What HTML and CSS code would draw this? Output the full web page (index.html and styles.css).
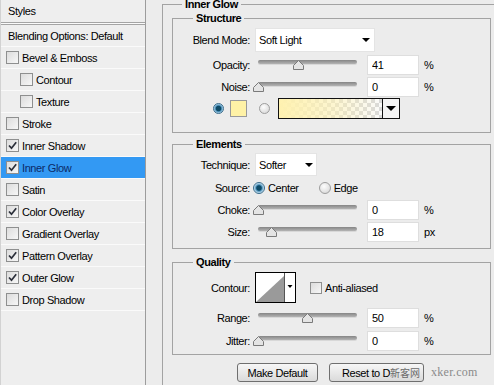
FILE: index.html
```html
<!DOCTYPE html>
<html lang="en">
<head>
    <meta charset="UTF-8">
    <title>Layer Style - Inner Glow</title>
    <link rel="stylesheet" href="styles.css">
</head>
<body>
<div class="app">
    <!-- Styles list -->
    <aside class="styles-list">
        <div class="list-head">Styles</div>
        <div class="list-item blending">Blending Options: Default</div>
        <div class="list-item"><span class="cb"></span>Bevel &amp; Emboss</div>
        <div class="list-item sub"><span class="cb"></span>Contour</div>
        <div class="list-item sub"><span class="cb"></span>Texture</div>
        <div class="list-item"><span class="cb"></span>Stroke</div>
        <div class="list-item"><span class="cb"><svg viewBox="0 0 11 11"><path d="M2 5.5 L4.5 8.2 L9.2 2.2"/></svg></span>Inner Shadow</div>
        <div class="list-item active"><span class="cb"><svg viewBox="0 0 11 11"><path d="M2 5.5 L4.5 8.2 L9.2 2.2"/></svg></span>Inner Glow</div>
        <div class="list-item"><span class="cb"></span>Satin</div>
        <div class="list-item"><span class="cb"><svg viewBox="0 0 11 11"><path d="M2 5.5 L4.5 8.2 L9.2 2.2"/></svg></span>Color Overlay</div>
        <div class="list-item"><span class="cb"></span>Gradient Overlay</div>
        <div class="list-item"><span class="cb"><svg viewBox="0 0 11 11"><path d="M2 5.5 L4.5 8.2 L9.2 2.2"/></svg></span>Pattern Overlay</div>
        <div class="list-item"><span class="cb"><svg viewBox="0 0 11 11"><path d="M2 5.5 L4.5 8.2 L9.2 2.2"/></svg></span>Outer Glow</div>
        <div class="list-item"><span class="cb"></span>Drop Shadow</div>
    </aside>

    <!-- Settings -->
    <main class="panel">
        <fieldset class="group outer">
            <legend>Inner Glow</legend>

            <fieldset class="group structure">
                <legend>Structure</legend>
                <div class="row row-blend">
                    <label class="lbl">Blend Mode:</label>
                    <div class="select select-blend">Soft Light<span class="arrow"></span></div>
                </div>
                <div class="row row-num">
                    <label class="lbl">Opacity:</label>
                    <div class="slider"><div class="track"></div><svg class="thumb" style="--v:41" viewBox="0 0 11 10"><path d="M5.5 0.5 L10.5 5.5 V9.5 H0.5 V5.5 Z"/></svg></div>
                    <input class="num" value="41"><span class="unit">%</span>
                </div>
                <div class="row row-num gap2">
                    <label class="lbl">Noise:</label>
                    <div class="slider"><div class="track"></div><svg class="thumb" style="--v:0" viewBox="0 0 11 10"><path d="M5.5 0.5 L10.5 5.5 V9.5 H0.5 V5.5 Z"/></svg></div>
                    <input class="num" value="0"><span class="unit">%</span>
                </div>
                <div class="row row-color">
                    <span class="radio small on"></span>
                    <span class="swatch"></span>
                    <span class="radio small"></span>
                    <div class="gradient"><span class="gradient-fill"></span><span class="gradient-drop"><span class="arrow big"></span></span></div>
                </div>
            </fieldset>

            <fieldset class="group elements">
                <legend>Elements</legend>
                <div class="row row-tech">
                    <label class="lbl">Technique:</label>
                    <div class="select select-tech">Softer<span class="arrow"></span></div>
                </div>
                <div class="row row-source">
                    <label class="lbl">Source:</label>
                    <span class="radio on"></span><span class="opt">Center</span>
                    <span class="radio second"></span><span class="opt">Edge</span>
                </div>
                <div class="row row-num gap1">
                    <label class="lbl">Choke:</label>
                    <div class="slider"><div class="track"></div><svg class="thumb" style="--v:0" viewBox="0 0 11 10"><path d="M5.5 0.5 L10.5 5.5 V9.5 H0.5 V5.5 Z"/></svg></div>
                    <input class="num" value="0"><span class="unit">%</span>
                </div>
                <div class="row row-num gap2">
                    <label class="lbl">Size:</label>
                    <div class="slider"><div class="track"></div><svg class="thumb" style="--v:14" viewBox="0 0 11 10"><path d="M5.5 0.5 L10.5 5.5 V9.5 H0.5 V5.5 Z"/></svg></div>
                    <input class="num" value="18"><span class="unit">px</span>
                </div>
            </fieldset>

            <fieldset class="group quality">
                <legend>Quality</legend>
                <div class="row row-contour">
                    <label class="lbl">Contour:</label>
                    <svg class="contour" viewBox="0 0 41 31" width="41" height="31">
                        <rect x="0.5" y="0.5" width="40" height="30" fill="#fff" stroke="#000"/>
                        <polygon points="1,30 29,4 29,30" fill="#9a9a9a"/>
                        <line x1="29.5" y1="1" x2="29.5" y2="30" stroke="#555"/>
                        <polygon points="32.5,13 37.5,13 35,16" fill="#000"/>
                    </svg>
                    <span class="cb box"></span><span class="opt">Anti-aliased</span>
                </div>
                <div class="row row-num gap5">
                    <label class="lbl">Range:</label>
                    <div class="slider"><div class="track"></div><svg class="thumb" style="--v:50" viewBox="0 0 11 10"><path d="M5.5 0.5 L10.5 5.5 V9.5 H0.5 V5.5 Z"/></svg></div>
                    <input class="num" value="50"><span class="unit">%</span>
                </div>
                <div class="row row-num gap3">
                    <label class="lbl">Jitter:</label>
                    <div class="slider"><div class="track"></div><svg class="thumb" style="--v:0" viewBox="0 0 11 10"><path d="M5.5 0.5 L10.5 5.5 V9.5 H0.5 V5.5 Z"/></svg></div>
                    <input class="num" value="0"><span class="unit">%</span>
                </div>
            </fieldset>

            <div class="buttons">
                <button class="btn btn-default">Make Default</button>
                <button class="btn btn-reset">Reset to D<span class="mark">新客网</span></button>
                <span class="site">xker.com</span>
            </div>
        </fieldset>
    </main>
</div>
</body>
</html>
```

FILE: styles.css
```css
/* Basic reset */
* {
    box-sizing: border-box;
    margin: 0;
    padding: 0;
}

body {
    font-family: "Liberation Sans", Arial, sans-serif;
    font-size: 11px;
    letter-spacing: -0.4px;
    color: #000;
    background: #ececec;
    overflow: hidden;
}

.app {
    display: flex;
    height: 385px;
}

/* Left list */
.styles-list {
    width: 146px;
    flex: none;
    background: #eeeeee;
    border-left: 1px solid #d2d2d2;
    border-right: 1px solid #9c9c9c;
}

.list-head {
    height: 23px;
    line-height: 22px;
    padding-left: 7px;
    border-bottom: 1px solid #a4a4a4;
    box-shadow: 0 1px 0 #fafafa;
}

.list-item {
    display: flex;
    align-items: center;
    height: 22px;
    padding-left: 5px;
    border-bottom: 1px solid #fafafa;
}

.list-item.blending {
    height: 23px;
    margin-top: 1px;
    padding-left: 7px;
    border-top: 1px solid #a4a4a4;
}

.list-item.sub {
    padding-left: 19px;
}

.list-item.active {
    background: #3399f3;
    color: #0c2a66;
}

.cb {
    width: 13px;
    height: 13px;
    margin-right: 3px;
    border: 1px solid #8e8f8f;
    background: linear-gradient(135deg, #dcdcdc, #f7f7f7);
    display: flex;
    align-items: center;
    justify-content: center;
    flex: none;
}

.cb svg {
    width: 11px;
    height: 11px;
}

.cb path {
    fill: none;
    stroke: #2b2f3a;
    stroke-width: 1.7;
}

/* Right panel */
.panel {
    flex: 1;
    min-width: 0;
    overflow: hidden;
}

.group {
    border: 1px solid #a3a3a3;
}

.group > legend {
    font-weight: bold;
    line-height: 12px;
    padding: 0 3px;
    margin-left: 20px;
}

.outer {
    width: max-content;
    margin: -1px 0 0 16px;
    padding: 0 20px 60px 9px;
}

.outer > legend {
    margin-left: 10px;
    line-height: 10px;
}

.structure,
.elements,
.quality {
    width: 319px;
}

.structure {
    margin-top: 3px;
    padding: 4px 0 13px;
}

.elements {
    margin-top: 5px;
    padding: 3px 0 6px;
}

.quality {
    margin-top: 7px;
    padding: 4px 0 3px;
}

.row {
    display: flex;
    align-items: center;
}

.lbl {
    width: 77px;
    flex: none;
    text-align: right;
}

.row-blend { height: 24px; }
.row-num { height: 20px; margin-top: 3px; }
.row-num.gap1 { margin-top: 1px; }
.row-num.gap2 { margin-top: 2px; }
.row-num.gap3 { margin-top: 3px; }
.row-num.gap5 { margin-top: 5px; }
.row-color { height: 21px; margin-top: 1px; padding-left: 40px; }
.row-tech { height: 23px; }
.row-source { height: 23px; }
.row-contour { height: 31px; }

.select {
    display: flex;
    align-items: center;
    justify-content: space-between;
    margin-left: 5px;
    padding: 0 4px 0 3px;
    background: #fff;
    border: 1px solid #e4e4e4;
}

.select-blend { width: 120px; height: 24px; }
.select-tech { width: 62px; height: 23px; padding-right: 3px; }

.arrow {
    width: 0;
    height: 0;
    border-left: 4px solid transparent;
    border-right: 4px solid transparent;
    border-top: 4px solid #000;
}

.arrow.big {
    border-left-width: 5px;
    border-right-width: 5px;
    border-top-width: 5px;
}

.slider {
    position: relative;
    width: 105px;
    height: 20px;
    margin-left: 5px;
}

.track {
    height: 4px;
    margin: 5px 3px 0;
    border-radius: 2px;
    background: linear-gradient(#858585, #b4b4b4);
    box-shadow: 0 1px 0 #d8d8d8;
}

.thumb {
    position: absolute;
    top: 5px;
    left: calc(var(--v) * 0.99px - 2.5px);
    width: 11px;
    height: 10px;
}

.thumb path {
    fill: #e4e4e4;
    stroke: #7a7a7a;
}

.num {
    width: 52px;
    height: 20px;
    margin-left: 7px;
    padding-left: 4px;
    border: 1px solid #dedede;
    background: #fff;
    font: inherit;
    letter-spacing: inherit;
    outline: none;
}

.unit {
    margin-left: 5px;
}

/* Radios and colour controls */
.radio {
    width: 12px;
    height: 12px;
    border-radius: 50%;
    flex: none;
    border: 1px solid #9d9d9d;
    background: radial-gradient(circle at 40% 35%, #fdfdfd, #d2d2d2);
}

.radio.small {
    width: 11px;
    height: 11px;
}

.radio.on {
    border-color: #3b6d8c;
    background: radial-gradient(circle, #0e4a66 0 2.3px, #4f94bd 3.2px, #cfe6f4 5px);
}

.row-source .radio { margin-left: 3px; }
.row-source .radio.second { margin-left: 20px; }

.opt {
    margin-left: 3px;
}

.swatch {
    width: 17px;
    height: 17px;
    margin-left: 6px;
    border: 1px solid #9a9a9a;
    background: #fff2a6;
}

.radio.small + .swatch + .radio.small {
    margin-left: 12px;
}

.gradient {
    display: flex;
    width: 122px;
    height: 21px;
    margin-left: 8px;
    border: 1px solid #111;
}

.gradient-fill {
    flex: 1;
    background:
        linear-gradient(to right, #fff2b0, rgba(255, 242, 176, 0.55) 55%, rgba(255, 242, 176, 0)),
        repeating-conic-gradient(#d9d9d9 0 25%, #fafafa 0 50%) 0 0 / 8px 8px;
}

.gradient-drop {
    width: 17px;
    display: flex;
    align-items: center;
    justify-content: center;
    border-left: 1px solid #111;
    background: #f4f4f4;
}

.contour {
    margin-left: 5px;
    flex: none;
}

.cb.box {
    width: 12px;
    height: 12px;
    margin: 0 0 0 14px;
}

/* Buttons */
.buttons {
    display: flex;
    align-items: center;
    margin: 8px 0 0 65px;
}

.btn {
    height: 19px;
    border: 1px solid #6f6f6f;
    border-radius: 3px;
    background: linear-gradient(#f7f7f7, #dadada);
    font: inherit;
    letter-spacing: inherit;
    color: #000;
    white-space: nowrap;
}

.btn-default { width: 81px; }

.btn-reset {
    width: 95px;
    margin-left: 11px;
    text-align: left;
    padding-left: 12px;
    overflow: hidden;
}

.mark {
    font-family: "Noto Sans CJK SC", sans-serif;
    font-size: 10px;
    color: #6a6a6a;
    letter-spacing: 0;
}

.site {
    margin-left: 7px;
    font-family: "Liberation Serif", serif;
    font-size: 12px;
    letter-spacing: 0.3px;
    color: #8a8a8a;
}
```
